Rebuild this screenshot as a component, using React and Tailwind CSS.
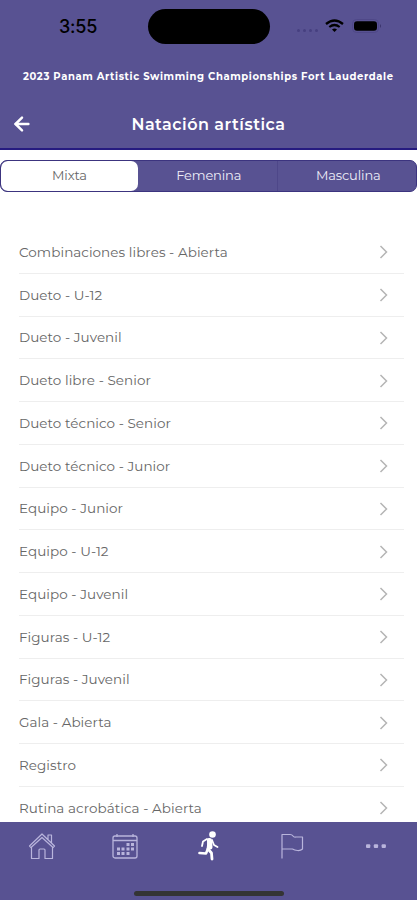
import React, { useState } from "react";
import { ArrowLeft } from "lucide-react";

const TABS = ["Mixta", "Femenina", "Masculina"];

const EVENTS = [
  "Combinaciones libres - Abierta",
  "Dueto - U-12",
  "Dueto - Juvenil",
  "Dueto libre - Senior",
  "Dueto técnico - Senior",
  "Dueto técnico - Junior",
  "Equipo - Junior",
  "Equipo - U-12",
  "Equipo - Juvenil",
  "Figuras - U-12",
  "Figuras - Juvenil",
  "Gala - Abierta",
  "Registro",
  "Rutina acrobática - Abierta",
];

function StatusBar() {
  return (
    <div className="h-[54px] pt-[9px] flex items-start text-black">
      <p className="w-[148px] pl-[59px] pt-[6px] font-['Inter',sans-serif] text-[18px] leading-6 font-medium tracking-[-0.2px]">3:55</p>
      <div className="w-[122px] h-[35px] rounded-full bg-black" />
      <div className="flex gap-[3px] ml-[27px] mt-[20px]">
        {[0, 1, 2, 3].map((i) => (
          <span key={i} className="w-[3px] h-[3px] rounded-full bg-[#464080]" />
        ))}
      </div>
      <svg className="ml-[7px] mt-[10px]" width="19" height="14" viewBox="0 0 19 14" fill="none" stroke="black">
        <path d="M1 5Q9.500 -2 18 5" strokeWidth="2.300" />
        <path d="M4.300 8Q9.500 4 14.700 8" strokeWidth="2.200" />
        <path d="M7 10.500Q9.500 8.500 12 10.500L9.500 13Z" fill="black" stroke="none" />
      </svg>
      <svg className="ml-[8px] mt-[10px]" width="31" height="15" viewBox="0 0 31 15">
        <rect x="0.500" y="0.500" width="26" height="13" rx="4" fill="none" stroke="#4f4888" />
        <rect x="2" y="2.250" width="23" height="9.500" rx="3" fill="black" />
        <path d="M28 5v4q2-2 0-4" fill="#39336b" />
      </svg>
    </div>
  );
}

function HomeIcon() {
  return (
    <svg width="28" height="28" viewBox="0 0 28 28" fill="none" stroke="currentColor" strokeWidth="1.200" strokeLinejoin="round">
      <path d="M1.500 14 14 2l12.500 12-1.500 1.500L14 5.500 3 15.500ZM3.500 15v11.500H11V18q0-1 1-1h4q1 0 1 1v8.500h7.500V15M20 7.500V3h3.500v8" />
    </svg>
  );
}

function CalendarIcon() {
  return (
    <svg width="28" height="28" viewBox="0 0 28 28" fill="none" stroke="currentColor" strokeWidth="1.300">
      <rect x="2" y="4" width="24" height="22" rx="2" />
      <path d="M2 8.500h24M6 2v3M22 2v3" />
      <path d="M15.500 12.500h3M20 12.500h3M6 17h3M10.500 17h3M15.500 17h3M20 17h3M6 21.500h3M10.500 21.500h3M15.500 21.500h3" strokeWidth="3" />
    </svg>
  );
}

function RunnerIcon() {
  return (
    <svg width="28" height="32" viewBox="0 0 28 32" fill="none" stroke="white" strokeLinecap="round" strokeLinejoin="round">
      <circle cx="17.500" cy="4.500" r="3.300" fill="white" stroke="none" />
      <path d="M14 10 13 19 16.500 23 17 29" strokeWidth="2.800" />
      <path d="m14.500 10.500.500 6.500" strokeWidth="5" />
      <path d="m13 18.500-2 5-6.500-.500" strokeWidth="2.600" />
      <path d="m12 9-4 2.500-1 4.500M17 10l2 5 3.500 2" strokeWidth="1.800" />
    </svg>
  );
}

function FlagIcon() {
  return (
    <svg width="28" height="28" viewBox="0 0 28 28" fill="none" stroke="currentColor" strokeWidth="1.200" strokeLinejoin="round">
      <path d="M4 26.500V2.500h8q2 0 3 1.500t3 1h6.500v12q-2 1.800-5 1.500t-5-1.500H4" />
    </svg>
  );
}

function MoreIcon() {
  return (
    <svg width="28" height="28" viewBox="0 0 28 28" fill="currentColor">
      <rect x="5" y="12.200" width="4.300" height="3.700" rx="1" />
      <rect x="12.800" y="12.200" width="4.300" height="3.700" rx="1" />
      <rect x="20.600" y="12.200" width="4.300" height="3.700" rx="1" />
    </svg>
  );
}

const NAV = [HomeIcon, CalendarIcon, RunnerIcon, FlagIcon, MoreIcon];

export default function App() {
  const [active, setActive] = useState(0);

  return (
    <div className="w-[417px] h-[900px] flex flex-col overflow-hidden bg-white font-['Montserrat','Inter',sans-serif]">
      {/* ---------- HEADER ---------- */}
      <header className="h-[150px] shrink-0 bg-[#585292] border-b-2 border-[#261b80] text-white">
        <StatusBar />
        <p className="mt-[15px] pl-[23px] text-[10px] leading-4 font-bold tracking-[0.61px] whitespace-nowrap">
          2023 Panam Artistic Swimming Championships Fort Lauderdale
        </p>
        <div className="mt-[19px] h-10 px-[11px] flex items-center">
          <ArrowLeft size={22} strokeWidth={2.7} />
          <h1 className="flex-1 pr-[22px] pt-px text-center text-base font-semibold tracking-[0.5px]">Natación artística</h1>
        </div>
      </header>

      {/* ---------- TABS ---------- */}
      <div className="mt-[10px] h-[32px] shrink-0 flex rounded-[7px] bg-[#585292] border border-[#3c347f] overflow-hidden">
        {TABS.map((tab, i) => (
          <button
            key={tab}
            onClick={() => setActive(i)}
            className={`pb-[2px] text-[13px] leading-[28px] tracking-[-0.15px] ${i === 0 ? "w-[137px]" : "flex-1 pl-[3px]"} ${
              active === i ? "bg-white text-[#666] rounded-[7px]" : "text-[#eeeef8]"
            } ${i === 2 ? "border-l border-[#4e4789]" : ""}`}
          >
            {tab}
          </button>
        ))}
      </div>

      {/* ---------- EVENT LIST ---------- */}
      <main className="flex-1 min-h-0 overflow-hidden pt-[39px] pl-[19px] pr-[13px]">
        {EVENTS.map((event) => (
          <div key={event} className="h-[42.750px] flex items-center justify-between border-b border-[#eee] pr-[15px]">
            <p className="text-[13.500px] text-[#666] tracking-[0.06px] whitespace-nowrap">{event}</p>
            <svg width="10" height="15" viewBox="0 0 10 15" fill="none" stroke="#b5b5b5" strokeWidth="1.500">
              <path d="m1.500 2 6 6-6 6" />
            </svg>
          </div>
        ))}
      </main>

      {/* ---------- BOTTOM NAV ---------- */}
      <nav className="h-[78px] shrink-0 bg-[#585292] text-[#b9b5dc]">
        <div className="h-[48px] flex">
          {NAV.map((Icon, i) => (
            <button key={i} className="flex-1 flex items-center justify-center">
              <Icon />
            </button>
          ))}
        </div>
        <div className="mx-auto mt-[21px] w-[150px] h-[5px] rounded-full bg-[#343434]" />
      </nav>
    </div>
  );
}
